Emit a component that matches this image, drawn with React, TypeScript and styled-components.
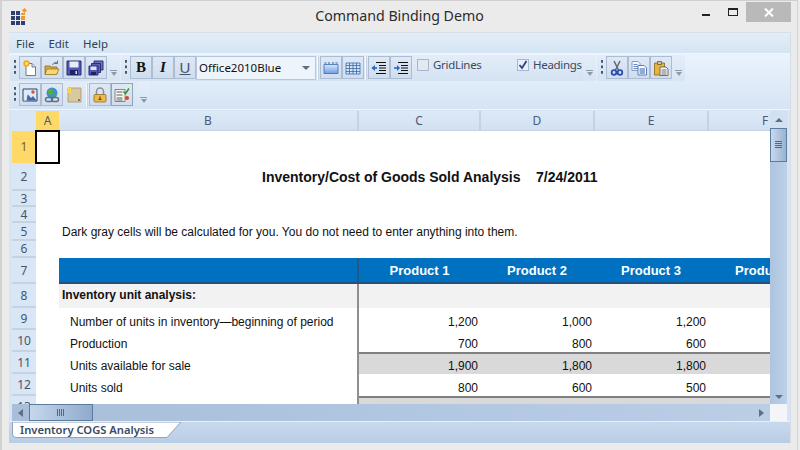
import styled, { createGlobalStyle } from "styled-components"

const ui = `"Noto Sans", "Open Sans", sans-serif`
const sheetFont = `"Liberation Sans", Arial, sans-serif`

const GlobalStyle = createGlobalStyle`
  html, body {
    margin: 0;
    padding: 0;
    background: #ebebeb;
  }
  #root {
    width: 800px;
    height: 450px;
    overflow: hidden;
  }
`

const Window = styled.div`
  box-sizing: border-box;
  width: 798px;
  height: 450px;
  background: #ebebeb;
  border-top: 1px solid #cfcfcf;
  border-left: 2px solid #d2d2d2;
  border-right: 1px solid #d2d2d2;
  padding: 0 6px 7px 7px;
  display: flex;
  flex-direction: column;
`

const TitleBar = styled.div`
  height: 31px;
  flex: none;
  display: grid;
  grid-template-columns: 1fr auto 1fr;
  align-items: start;
  margin-left: -7px;
  margin-right: -6px;
`

const AppIcon = styled.svg`
  width: 18px;
  height: 18px;
  margin: 7px 0 0 8px;
`

const Title = styled.div`
  font: 14.2px ${ui};
  color: #2b2b2b;
  line-height: 30px;
`

const WindowButtons = styled.div`
  display: flex;
  justify-content: flex-end;
  padding-right: 6px;
  padding-top: 1px;
`

const WinGlyph = styled.div<{ $width: number }>`
  width: ${(p) => p.$width}px;
  height: 20px;
  display: flex;
  align-items: center;
  justify-content: center;
`

const CloseButton = styled(WinGlyph)`
  background: #b9b9b9;
`

const MinLine = styled.div`
  width: 8px;
  height: 2px;
  margin-top: 5px;
  background: #222;
`

const MaxBox = styled.div`
  box-sizing: border-box;
  width: 10px;
  height: 8px;
  border: 1px solid #222;
  border-top-width: 2px;
`

const Content = styled.div`
  flex: 1;
  min-height: 0;
  display: flex;
  flex-direction: column;
  background: #d6e4f3;
  border-top: 1px solid #d8dfe7;
  border-right: 1px solid #d5dde6;
`

const MenuBar = styled.div`
  height: 20px;
  flex: none;
  display: flex;
  align-items: center;
  gap: 14px;
  padding-left: 7px;
  background: linear-gradient(#e1edf9, #d5e4f3);
  font: 11.5px ${ui};
  color: #2f3f55;
`

const Tray = styled.div`
  height: 57px;
  flex: none;
  box-sizing: border-box;
  background: linear-gradient(#eaf3fd, #d6e4f3);
  border-top: 1px solid #eff6fd;
  border-bottom: 1px solid #eef5fc;
  display: flex;
  flex-direction: column;
`

const ToolRow = styled.div`
  height: 27px;
  flex: none;
  display: flex;
  align-items: center;
  padding-left: 1px;
`

const Band = styled.div<{ $gapAfter?: number }>`
  height: 26px;
  display: flex;
  align-items: center;
  border-radius: 3px;
  background: linear-gradient(#e3edf9, #d4e2f2);
  margin-right: ${(p) => p.$gapAfter ?? 0}px;
`

const Grip = styled.div`
  width: 9px;
  height: 16px;
  flex: none;
  background: radial-gradient(circle at 5px 1.5px, #48586e 1.2px, transparent 1.5px) 0 0 / 9px 5.5px;
`

const ToolButton = styled.div<{ $plain?: boolean; $raised?: boolean }>`
  box-sizing: border-box;
  width: 22px;
  height: 23px;
  flex: none;
  display: flex;
  align-items: center;
  justify-content: center;
  border: 1px solid ${(p) => (p.$plain ? "transparent" : p.$raised ? "#93a4ba" : "#acbdd3")};
  background: ${(p) => (p.$plain ? "transparent" : "linear-gradient(#dfe9f5, #cfddee)")};
`

const FontGlyph = styled.span<{ $serif?: boolean; $italic?: boolean; $under?: boolean }>`
  font-family: ${(p) => (p.$serif ? `"Liberation Serif", serif` : `"Liberation Sans", sans-serif`)};
  font-size: 15px;
  font-weight: ${(p) => (p.$serif ? 700 : 400)};
  font-style: ${(p) => (p.$italic ? "italic" : "normal")};
  text-decoration: ${(p) => (p.$under ? "underline" : "none")};
  color: ${(p) => (p.$under ? "#46566c" : "#111")};
`

const Combo = styled.div`
  box-sizing: border-box;
  width: 120px;
  height: 24px;
  flex: none;
  display: flex;
  align-items: center;
  justify-content: space-between;
  padding: 0 3px 0 2px;
  background: #edf4fb;
  border: 1px solid #b5c8de;
  font: 11.5px ${ui};
  color: #111;
`

const ComboArrow = styled.div`
  width: 0;
  height: 0;
  margin-right: 2px;
  border-left: 4px solid transparent;
  border-right: 4px solid transparent;
  border-top: 4px solid #5e6c7f;
`

const Sep = styled.div`
  box-sizing: border-box;
  width: 4px;
  height: 24px;
  flex: none;
  background: linear-gradient(90deg, transparent 1px, #f6fafe 1px, #f6fafe 2px, #c4d2e3 2px, #c4d2e3 3px, transparent 3px);
`

const CheckGroup = styled.div<{ $width: number; $first?: boolean }>`
  width: ${(p) => p.$width}px;
  margin-left: ${(p) => (p.$first ? 5 : 0)}px;
  flex: none;
  align-self: flex-start;
  display: flex;
  align-items: center;
  gap: 4px;
  height: 16px;
  margin-top: 2px;
  white-space: nowrap;
  font: 11.5px ${ui};
  letter-spacing: -0.3px;
  color: #3b4a5f;
`

const CheckBox = styled.div<{ $checked?: boolean }>`
  box-sizing: border-box;
  width: 12px;
  height: 12px;
  flex: none;
  display: flex;
  align-items: center;
  justify-content: center;
  border: 1px solid #a8b8cc;
  background: ${(p) => (p.$checked ? "#e6effa" : "#e4e9ef")};
`

const Overflow = styled.div`
  width: 13px;
  height: 26px;
  flex: none;
  display: flex;
  flex-direction: column;
  align-items: center;
  justify-content: flex-end;
  padding-bottom: 5px;
  box-sizing: border-box;
  background: linear-gradient(#e4eefa, #d7e4f3);
  border-radius: 0 3px 3px 0;
  &::before {
    content: "";
    width: 7px;
    height: 1px;
    background: #8d9aab;
    margin-bottom: 1px;
  }
  &::after {
    content: "";
    width: 0;
    height: 0;
    border-left: 3.5px solid transparent;
    border-right: 3.5px solid transparent;
    border-top: 4px solid #8d9aab;
  }
`

const Sheet = styled.div`
  flex: 1;
  min-height: 0;
  margin: 1px 2px 0 3px;
  display: grid;
  grid-template-columns: 758px 17px;
  grid-template-rows: 293px 17px;
`

const Cells = styled.div`
  overflow: hidden;
  background: #fff;
`

const HeaderRow = styled.div`
  display: flex;
  height: 20px;
  width: 800px;
`

const Corner = styled.div`
  width: 24px;
  flex: none;
  background: #d9e6f5;
`

const ColHead = styled.div<{ $width: number; $active?: boolean }>`
  box-sizing: border-box;
  width: ${(p) => p.$width}px;
  flex: none;
  display: flex;
  align-items: center;
  justify-content: center;
  font: 12px ${ui};
  color: #4a5c75;
  background: ${(p) => (p.$active ? "#ffd966" : "linear-gradient(#dce9f7, #d2e1f2)")};
  border-right: ${(p) => (p.$active ? "0" : "2px solid #c5d2e0")};
  border-bottom: 1px solid #c5d2e0;
`

const SheetRow = styled.div<{ $height: number }>`
  display: flex;
  height: ${(p) => p.$height}px;
  width: 800px;
`

const RowHead = styled.div<{ $active?: boolean }>`
  box-sizing: border-box;
  width: 24px;
  flex: none;
  display: flex;
  align-items: center;
  justify-content: center;
  font: 12px ${ui};
  color: ${(p) => (p.$active ? "#7a5a3c" : "#45566c")};
  background: ${(p) => (p.$active ? "#ffd966" : "#d9e6f5")};
  border-bottom: 2px solid ${(p) => (p.$active ? "#ffd966" : "#c5d2e0")};
`

const Cell = styled.div<{
  $width: number
  $fill?: string
  $right?: boolean
  $center?: boolean
  $bold?: boolean
  $size?: number
  $indent?: number
  $nudge?: number
  $topRule?: boolean
  $bottomRule?: boolean
  $divider?: string
  $white?: boolean
}>`
  box-sizing: border-box;
  width: ${(p) => p.$width}px;
  flex: none;
  display: flex;
  align-items: center;
  justify-content: ${(p) => (p.$right ? "flex-end" : p.$center ? "center" : "flex-start")};
  padding: ${(p) => (p.$right ? "0 2px 0 0" : `0 0 0 ${p.$indent ?? 0}px`)};
  padding-top: ${(p) => Math.max(p.$nudge ?? 0, 0)}px;
  padding-bottom: ${(p) => Math.max(-(p.$nudge ?? 0), 0)}px;
  white-space: pre;
  font-family: ${sheetFont};
  font-size: ${(p) => p.$size ?? 12}px;
  font-weight: ${(p) => (p.$bold ? 700 : 400)};
  color: ${(p) => (p.$white ? "#fff" : "#111")};
  background: ${(p) => p.$fill ?? "transparent"};
  border-top: ${(p) => (p.$topRule ? "2px solid #808080" : "0")};
  border-bottom: ${(p) => (p.$bottomRule ? "2px solid #24527c" : "0")};
  border-right: ${(p) => (p.$divider ? `2px solid ${p.$divider}` : "0")};
`

const SelectedCell = styled.div`
  position: relative;
  box-sizing: border-box;
  width: 25px;
  flex: none;
  margin: -1px 0 -1px -1px;
  border: 2px solid #000;
  background: #fff;
`

const VScroll = styled.div`
  grid-row: 1;
  grid-column: 2;
  display: flex;
  flex-direction: column;
  align-items: center;
  background: linear-gradient(90deg, #aec4df, #bcd0e7);
`

const ArrowUp = styled.div`
  height: 17px;
  flex: none;
  width: 100%;
  display: flex;
  align-items: center;
  justify-content: center;
  background: #d2e1f2;
  &::after {
    content: "";
    border-left: 4px solid transparent;
    border-right: 4px solid transparent;
    border-bottom: 4px solid #5d7088;
  }
`

const VThumb = styled.div`
  box-sizing: border-box;
  width: 17px;
  height: 34px;
  flex: none;
  display: flex;
  align-items: center;
  justify-content: center;
  border: 1px solid #5c7c9f;
  background: linear-gradient(90deg, #c9d9ec, #99b2d0);
`

const ThumbLines = styled.div<{ $vertical?: boolean }>`
  width: ${(p) => (p.$vertical ? 8 : 7)}px;
  height: ${(p) => (p.$vertical ? 7 : 8)}px;
  background: ${(p) =>
    p.$vertical
      ? "repeating-linear-gradient(90deg, #56687f 0 1px, transparent 1px 2px)"
      : "repeating-linear-gradient(#56687f 0 1px, transparent 1px 2px)"};
`

const ArrowDown = styled.div`
  margin-top: auto;
  height: 15px;
  flex: none;
  display: flex;
  align-items: center;
  justify-content: center;
  &::after {
    content: "";
    border-left: 4px solid transparent;
    border-right: 4px solid transparent;
    border-top: 4px solid #5d7088;
  }
`

const HScroll = styled.div`
  grid-row: 2;
  grid-column: 1;
  display: flex;
  align-items: center;
  background: linear-gradient(90deg, #a8bed9, #bacee6);
`

const ArrowLeft = styled.div`
  width: 17px;
  height: 17px;
  flex: none;
  display: flex;
  align-items: center;
  justify-content: center;
  &::after {
    content: "";
    border-top: 4px solid transparent;
    border-bottom: 4px solid transparent;
    border-right: 5px solid #5d7088;
  }
`

const HThumb = styled.div`
  box-sizing: border-box;
  width: 64px;
  height: 17px;
  flex: none;
  display: flex;
  align-items: center;
  justify-content: center;
  border: 1px solid #5c7c9f;
  background: linear-gradient(90deg, #c5d7eb, #8fabcc);
`

const ArrowRight = styled.div`
  margin-left: auto;
  width: 17px;
  height: 17px;
  flex: none;
  display: flex;
  align-items: center;
  justify-content: center;
  &::after {
    content: "";
    border-top: 4px solid transparent;
    border-bottom: 4px solid transparent;
    border-left: 5px solid #5d7088;
  }
`

const ScrollCorner = styled.div`
  grid-row: 2;
  grid-column: 2;
  background: #f3f5f8;
`

const TabBar = styled.div`
  height: 22px;
  flex: none;
  margin-top: 1px;
  border-top: 1px solid #e6effa;
  padding-left: 3px;
  box-sizing: border-box;
  background: linear-gradient(#c9d9ec, #b8cde6);
`

const Tab = styled.div`
  position: relative;
  width: 170px;
  height: 16px;
  font: 600 11.2px ${ui};
  color: #3a4a66;
  line-height: 15px;
  padding-left: 8px;
  box-sizing: border-box;
`

const TabShape = styled.svg`
  position: absolute;
  left: 0;
  top: 0;
  width: 170px;
  height: 16px;
`

const TabLabel = styled.span`
  position: relative;
`

const Ico = styled.svg`
  width: 16px;
  height: 16px;
  display: block;
`

const NewIcon = () => (
  <Ico viewBox="0 0 16 16">
    <path d="M4 3.500h6l3.500 3.500v8.500H4z" fill="#fff" stroke="#6d7a8a" strokeWidth="1" />
    <path d="M10 3.500V7h3.500" fill="#dfe6ee" stroke="#6d7a8a" />
    <circle cx="4.500" cy="3.500" r="3.200" fill="#f7a81b" />
    <circle cx="4.500" cy="3.500" r="1.500" fill="#ffe36e" />
  </Ico>
)

const OpenIcon = () => (
  <Ico viewBox="0 0 16 16">
    <path d="M1 6h5l1 1h6v7H1z" fill="#d9a93a" stroke="#8c6a1c" strokeWidth=".8" />
    <path d="M3 9h12l-2.500 5.500H1z" fill="#f6d77b" stroke="#9c7720" strokeWidth=".8" />
    <path d="M8.500 5c1-2.500 3-3 4.500-2M13.500 .5v3H10.500" fill="none" stroke="#5a6f92" strokeWidth="1" />
  </Ico>
)

const SaveIcon = () => (
  <Ico viewBox="0 0 16 16">
    <path d="M1 1h14v14H1z" fill="#4f55b5" stroke="#2b2f72" />
    <path d="M3.500 1.500h9v6h-9z" fill="#e8ecf5" />
    <path d="M4 10h8v5H4z" fill="#20245e" />
    <path d="M9.500 11h1.500v3H9.500z" fill="#dfe3f0" />
  </Ico>
)

const SaveAllIcon = () => (
  <Ico viewBox="0 0 16 16">
    <path d="M6 1h9v9H6z" fill="#6a72c4" stroke="#2b2f72" />
    <path d="M3.500 3.500h9v9h-9z" fill="#5a61bd" stroke="#2b2f72" />
    <path d="M1 6h9v9H1z" fill="#4f55b5" stroke="#2b2f72" />
    <path d="M2.500 6.500h6v3.500h-6z" fill="#dfe3f3" />
    <path d="M3 12h5v3H3z" fill="#20245e" />
  </Ico>
)

const TopTableIcon = () => (
  <Ico viewBox="0 0 16 16">
    <defs>
      <linearGradient id="tb" x1="0" y1="0" x2="0" y2="1">
        <stop offset="0" stopColor="#d8e6f8" />
        <stop offset="1" stopColor="#6f9fe4" />
      </linearGradient>
    </defs>
    <path d="M1 4.500h14v9H1z" fill="url(#tb)" stroke="#3569b0" strokeWidth=".8" />
    <path d="M1.500 3h2M5 3h2M9 3h2M12.500 3h2" stroke="#2f5fa5" strokeWidth="1.200" />
  </Ico>
)

const GridIcon = () => (
  <Ico viewBox="0 0 16 16">
    <path d="M1 3h14v11H1z" fill="#d6e3f5" stroke="#3569b0" strokeWidth=".8" />
    <path d="M1 5.500h14M1 8.500h14M1 11.500h14M4.500 3v11M8 3v11M11.500 3v11" stroke="#3569b0" strokeWidth=".8" />
  </Ico>
)

const IndentIcon = ({ flip }: { flip?: boolean }) => (
  <Ico viewBox="0 0 16 16">
    <path d="M5 2.500h10M8 5.500h7M8 8h7M8 10.500h7M5 13.500h10" stroke="#111" strokeWidth="1.100" />
    <path d="M1 8h5" stroke="#2d68c4" strokeWidth="1.600" />
    {flip ? <path d="M7 8L4 5v6z" fill="#2d68c4" /> : <path d="M.5 8L4 5v6z" fill="#2d68c4" />}
  </Ico>
)

const CutIcon = () => (
  <Ico viewBox="0 0 16 16">
    <path d="M5 1l4.500 9M11 1L6.500 10" stroke="#5f6770" strokeWidth="1.500" fill="none" />
    <circle cx="5" cy="12.500" r="2.300" fill="none" stroke="#2c4fb0" strokeWidth="1.800" />
    <circle cx="11" cy="12.500" r="2.300" fill="none" stroke="#2c4fb0" strokeWidth="1.800" />
  </Ico>
)

const CopyIcon = () => (
  <Ico viewBox="0 0 16 16">
    <path d="M1 1.500h6l2 2v7H1z" fill="#f5f8fc" stroke="#6e87ab" strokeWidth=".8" />
    <path d="M2.500 4.500h4M2.500 6.500h5M2.500 8.500h5" stroke="#3e6fb8" strokeWidth=".8" />
    <path d="M7 5.500h6l2.500 2.500v7H7z" fill="#fff" stroke="#40619a" strokeWidth=".8" />
    <path d="M8.500 9h5.500M8.500 11h5.500M8.500 13h5.500" stroke="#2259b5" strokeWidth="1" />
  </Ico>
)

const PasteIcon = () => (
  <Ico viewBox="0 0 16 16">
    <path d="M1.500 3h10v12h-10z" fill="#e7b53c" stroke="#8a6413" strokeWidth=".8" />
    <path d="M4.500 1.500h4v3h-4z" fill="#c9c5b2" stroke="#6d5a24" strokeWidth=".8" />
    <path d="M7 7h6l2 2v6.500H7z" fill="#f3f4f6" stroke="#555" strokeWidth=".8" />
    <path d="M8.500 10h5M8.500 12h5M8.500 14h5" stroke="#555" strokeWidth=".8" />
  </Ico>
)

const PictureIcon = () => (
  <Ico viewBox="0 0 16 16">
    <path d="M1 2h14v12H1z" fill="#dceafa" stroke="#2d4468" />
    <path d="M1.500 13.500l4.500-6 3 3.500 2-2 3.500 4.500z" fill="#3f6aa5" />
    <path d="M5.500 8l-4 5.500h3z" fill="#f3f7fc" />
    <circle cx="11" cy="5" r="1.700" fill="#e0502e" />
  </Ico>
)

const GlobeLinkIcon = () => (
  <Ico viewBox="0 0 16 16">
    <circle cx="8" cy="6" r="5.500" fill="#3d8fd0" />
    <path d="M4 2.500c3-1 5 0 5 2s-2 4-4 3S3 4 4 2.500z" fill="#57ad3f" />
    <path d="M10 7c1.500 0 2 1 1 3l-2 0z" fill="#57ad3f" />
    <rect x="1.500" y="10.500" width="7" height="4" rx="2" fill="none" stroke="#5e6f85" strokeWidth="1.400" />
    <rect x="7.500" y="10.500" width="7" height="4" rx="2" fill="none" stroke="#5e6f85" strokeWidth="1.400" />
  </Ico>
)

const NoteIcon = () => (
  <Ico viewBox="0 0 16 16">
    <path d="M2 1h13v14H2z" fill="#d8c9a0" stroke="#a8966a" strokeWidth=".8" />
    <path d="M2 1l3 0 0 5-3 0z" fill="#ffe36e" />
    <path d="M3.500 .5v6M1 3.500h5" stroke="#f8cf3a" strokeWidth="1.400" />
    <path d="M12 12h2v2h-2z" fill="#8c7a4f" />
  </Ico>
)

const LockIcon = () => (
  <Ico viewBox="0 0 16 16">
    <path d="M4.500 8V4.500a3.500 3.500 0 0 1 7 0V8" fill="none" stroke="#8c8f96" strokeWidth="1.500" />
    <rect x="2" y="7.500" width="12" height="7.500" rx="1" fill="#eeb84a" stroke="#96701c" strokeWidth=".8" />
    <path d="M8 9.500v3M6.500 12.500h3" stroke="#5d4510" strokeWidth="1.200" />
  </Ico>
)

const ChecklistIcon = () => (
  <Ico viewBox="0 0 16 16">
    <path d="M1 2.500h10v12H1z" fill="#f5f6ee" stroke="#6a6f57" strokeWidth=".8" />
    <path d="M2.500 5h6M2.500 8h6M2.500 11h6M2.500 13h6" stroke="#5b6172" strokeWidth="1" />
    <path d="M9.500 4.500l2 2 3.500-5" fill="none" stroke="#2f9a32" strokeWidth="1.600" />
    <circle cx="13" cy="11" r="2" fill="#d8442d" />
  </Ico>
)

const rowLabels: { n: string; h: number }[] = [
  { n: "1", h: 32 },
  { n: "2", h: 28 },
  { n: "3", h: 16 },
  { n: "4", h: 16 },
  { n: "5", h: 18 },
  { n: "6", h: 17 },
  { n: "7", h: 26 },
  { n: "8", h: 24 },
  { n: "9", h: 22 },
  { n: "10", h: 22 },
  { n: "11", h: 22 },
  { n: "12", h: 22 },
  { n: "13", h: 22 },
]

const columns = [
  { name: "A", w: 23 },
  { name: "B", w: 300 },
  { name: "C", w: 122 },
  { name: "D", w: 114 },
  { name: "E", w: 114 },
  { name: "F", w: 114 },
]

const dataRows: Record<string, { label: string; values: string[]; shaded?: boolean }> = {
  "9": { label: "Number of units in inventory—beginning of period", values: ["1,200", "1,000", "1,200"] },
  "10": { label: "Production", values: ["700", "800", "600"] },
  "11": { label: "Units available for sale", values: ["1,900", "1,800", "1,800"], shaded: true },
  "12": { label: "Units sold", values: ["800", "600", "500"] },
  "13": { label: "", values: ["", "", "", ""], shaded: true },
}

const colA = 23
const colB = 300
const valueWidths = [121, 114, 114, 114]

const renderCells = (n: string) => {
  if (n === "1") {
    return <SelectedCell />
  }
  if (n === "2") {
    return (
      <>
        <Cell $width={colA} />
        <Cell $width={colB} $bold $size={14} $indent={203}>
          {"Inventory/Cost of Goods Sold Analysis    7/24/2011"}
        </Cell>
      </>
    )
  }
  if (n === "5") {
    return (
      <>
        <Cell $width={colA} />
        <Cell $width={colB} $indent={3}>
          Dark gray cells will be calculated for you. You do not need to enter anything into them.
        </Cell>
      </>
    )
  }
  if (n === "7") {
    return (
      <>
        <Cell $width={colA} />
        <Cell $width={colB} $fill="#0070c0" $divider="#1f5a8a" $bottomRule />
        {["Product 1", "Product 2", "Product 3", "Product 4"].map((p, i) => (
          <Cell key={p} $width={valueWidths[i]} $fill="#0070c0" $center $bold $size={13} $white $bottomRule>
            {p}
          </Cell>
        ))}
      </>
    )
  }
  if (n === "8") {
    return (
      <>
        <Cell $width={colA} />
        <Cell $width={colB} $fill="#f2f2f2" $bold $indent={3} $nudge={-2} $divider="#8f8f8f">
          Inventory unit analysis:
        </Cell>
        <Cell $width={500} $fill="#f2f2f2" />
      </>
    )
  }
  const row = dataRows[n]
  if (row) {
    return (
      <>
        <Cell $width={colA} />
        <Cell $width={colB} $indent={11} $nudge={6} $divider="#8f8f8f">
          {row.label}
        </Cell>
        {valueWidths.map((w, i) => (
          <Cell
            key={i}
            $width={w}
            $right
            $nudge={row.shaded ? 4 : 6}
            $fill={row.shaded ? "#d9d9d9" : undefined}
            $topRule={row.shaded}
          >
            {row.values[i]}
          </Cell>
        ))}
      </>
    )
  }
  return null
}

export default function App() {
  return (
    <>
      <GlobalStyle />
      <Window>
        <TitleBar>
          <AppIcon viewBox="0 0 18 18">
            <path d="M1 3h4v4H1zM6 3h4v4H6zM1 8h4v4H1zM6 8h4v4H6zM1 13h4v4H1zM6 13h4v4H6zM11 13h4v4h-4z" fill="#2f3e75" />
            <path d="M11 8h4v4h-4zM11 5h4v2h-4z" fill="#ee9a2e" />
            <path d="M14.500 0l2.500 2.500L14.500 5 12 2.500z" fill="#ee9a2e" />
          </AppIcon>
          <Title>Command Binding Demo</Title>
          <WindowButtons>
            <WinGlyph $width={27}>
              <MinLine />
            </WinGlyph>
            <WinGlyph $width={27}>
              <MaxBox />
            </WinGlyph>
            <CloseButton $width={45}>
              <svg width="10" height="9" viewBox="0 0 10 9">
                <path d="M1 .5l8 8M9 .5l-8 8" stroke="#fff" strokeWidth="2" />
              </svg>
            </CloseButton>
          </WindowButtons>
        </TitleBar>
        <Content>
          <MenuBar>
            <span>File</span>
            <span>Edit</span>
            <span>Help</span>
          </MenuBar>
          <Tray>
            <ToolRow>
              <Band $gapAfter={1}>
                <Grip />
                <ToolButton><NewIcon /></ToolButton>
                <ToolButton><OpenIcon /></ToolButton>
                <ToolButton><SaveIcon /></ToolButton>
                <ToolButton><SaveAllIcon /></ToolButton>
                <Overflow />
              </Band>
              <Band $gapAfter={1}>
                <Grip />
                <ToolButton><FontGlyph $serif>B</FontGlyph></ToolButton>
                <ToolButton><FontGlyph $serif $italic>I</FontGlyph></ToolButton>
                <ToolButton><FontGlyph $under>U</FontGlyph></ToolButton>
                <Combo>
                  Office2010Blue
                  <ComboArrow />
                </Combo>
                <Sep />
                <ToolButton><TopTableIcon /></ToolButton>
                <ToolButton><GridIcon /></ToolButton>
                <Sep />
                <ToolButton><IndentIcon /></ToolButton>
                <ToolButton><IndentIcon flip /></ToolButton>
                <CheckGroup $width={100} $first>
                  <CheckBox />
                  GridLines
                </CheckGroup>
                <CheckGroup $width={66}>
                  <CheckBox $checked>
                    <svg width="10" height="10" viewBox="0 0 10 10">
                      <path d="M1.500 5l2.500 3 4.500-7" fill="none" stroke="#27457e" strokeWidth="1.800" />
                    </svg>
                  </CheckBox>
                  Headings
                </CheckGroup>
                <Overflow />
              </Band>
              <Band>
                <Grip />
                <ToolButton><CutIcon /></ToolButton>
                <ToolButton><CopyIcon /></ToolButton>
                <ToolButton><PasteIcon /></ToolButton>
                <Overflow />
              </Band>
            </ToolRow>
            <ToolRow>
              <Band $gapAfter={4}>
                <Grip />
                <ToolButton><PictureIcon /></ToolButton>
                <ToolButton><GlobeLinkIcon /></ToolButton>
                <ToolButton $plain><NoteIcon /></ToolButton>
                <Sep />
                <ToolButton><LockIcon /></ToolButton>
                <ToolButton $raised><ChecklistIcon /></ToolButton>
              </Band>
              <Overflow />
            </ToolRow>
          </Tray>
          <Sheet>
            <Cells>
              <HeaderRow>
                <Corner />
                {columns.map((c) => (
                  <ColHead key={c.name} $width={c.w} $active={c.name === "A"}>
                    {c.name}
                  </ColHead>
                ))}
              </HeaderRow>
              {rowLabels.map((r) => (
                <SheetRow key={r.n} $height={r.h}>
                  <RowHead $active={r.n === "1"}>{r.n}</RowHead>
                  {renderCells(r.n)}
                </SheetRow>
              ))}
            </Cells>
            <VScroll>
              <ArrowUp />
              <VThumb>
                <ThumbLines />
              </VThumb>
              <ArrowDown />
            </VScroll>
            <HScroll>
              <ArrowLeft />
              <HThumb>
                <ThumbLines $vertical />
              </HThumb>
              <ArrowRight />
            </HScroll>
            <ScrollCorner />
          </Sheet>
          <TabBar>
            <Tab>
              <TabShape viewBox="0 0 170 16">
                <path d="M.5 0V12Q.5 15.500 4 15.500H155L169 0Z" fill="#fff" stroke="#8ea3bf" />
              </TabShape>
              <TabLabel>Inventory COGS Analysis</TabLabel>
            </Tab>
          </TabBar>
        </Content>
      </Window>
    </>
  )
}
